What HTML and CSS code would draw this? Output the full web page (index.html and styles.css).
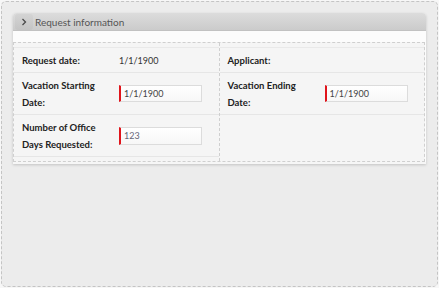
FILE: index.html
```html
<!DOCTYPE html>
<html>
<head>
<meta charset="utf-8">
<link rel="stylesheet" href="styles.css">
</head>
<body>
<div class="frame">
  <div class="panel">
    <div class="panel-header">
      <span class="toggle"><svg width="6" height="8" viewBox="0 0 6 8"><polyline points="1.5,1 4.5,4 1.5,7" fill="none" stroke="#4a4a4a" stroke-width="1.3"/></svg></span>
      <span class="title">Request information</span>
    </div>
    <div class="panel-body">
      <div class="fieldset">
        <div class="col col-left">
          <div class="row row-short">
            <span class="label">Request date:</span>
            <span class="value">1/1/1900</span>
          </div>
          <div class="row row-tall">
            <span class="label">Vacation Starting<br>Date:</span>
            <span class="input">1/1/1900</span>
          </div>
          <div class="row row-tall">
            <span class="label">Number of Office<br>Days Requested:</span>
            <span class="input input-muted">123</span>
          </div>
        </div>
        <div class="col">
          <div class="row row-short">
            <span class="label">Applicant:</span>
          </div>
          <div class="row row-tall">
            <span class="label">Vacation Ending<br>Date:</span>
            <span class="input">1/1/1900</span>
          </div>
        </div>
      </div>
    </div>
  </div>
</div>
</body>
</html>
```
FILE: styles.css
```css
html, body {
  margin: 0;
  padding: 0;
  background: #f7f7f7;
  font-family: Lato, "Open Sans", sans-serif;
}
.frame {
  box-sizing: border-box;
  margin: 1px 1px 0 1px;
  height: 286px;
  border: 1px dashed #c4c4c4;
  border-radius: 5px;
  background: #ececec;
  padding: 11px 11px 0 11px;
}
.panel {
  width: 413px;
  background: #f6f6f6;
  border-radius: 4px 4px 0 0;
  box-shadow: 0 1px 3px rgba(0,0,0,0.18);
  padding-bottom: 2px;
}
.panel-header {
  height: 18px;
  display: flex;
  align-items: center;
  background: linear-gradient(#dcdcdc, #cbcbcb);
  border-radius: 4px 4px 0 0;
  border-bottom: 1px solid #c2c2c2;
  box-sizing: border-box;
}
.toggle {
  display: flex;
  align-items: center;
  justify-content: center;
  width: 18px;
  height: 16px;
  margin-left: 2px;
  border-radius: 3px;
  background: rgba(0,0,0,0.03);
}
.title {
  margin-left: 2px;
  font-size: 10px;
  color: #555;
}
.panel-body {
  background: #fcfcfc;
  padding-top: 11px;
}
.fieldset {
  display: flex;
  border: 1px dashed #cfcfcf;
  background: #f5f5f5;
  margin-right: 1px;
}
.col {
  width: 206px;
  padding: 4px 0 4px 0;
}
.col-left {
  border-right: 1px dashed #cfcfcf;
}
.row {
  box-sizing: border-box;
  display: flex;
  align-items: center;
  padding: 0 8px;
  border-bottom: 1px solid #e6e6e6;
}
.row:first-child {
  border-top: 1px solid #e9e9e9;
}
.row-short {
  height: 26px;
}
.row-tall {
  height: 42px;
}
.label {
  width: 97px;
  flex: none;
  font-size: 9.5px;
  font-weight: bold;
  line-height: 17px;
  color: #222;
}
.value {
  font-size: 9px;
  color: #333;
}
.input {
  box-sizing: border-box;
  width: 83px;
  height: 17px;
  border: 1px solid #dcdcdc;
  border-left: 2px solid #e0141b;
  background: linear-gradient(#ffffff, #f7f7f7);
  font-size: 9px;
  line-height: 15px;
  color: #444;
  padding-left: 3px;
}
.input-muted {
  height: 18px;
  line-height: 16px;
  color: #667;
}
```
